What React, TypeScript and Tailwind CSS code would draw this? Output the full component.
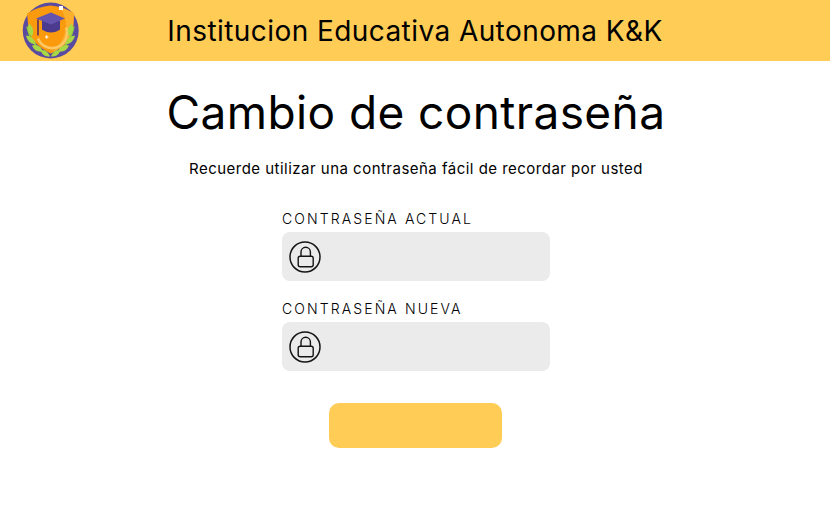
function Logo() {
  // viewBox uses the same coordinates as the page so it is easy to compare with the screenshot
  return (
    <svg width="58" height="58" viewBox="22 1.5 58 58" className="block">
      <circle cx="50.7" cy="30" r="28" fill="#5a4aa0" />
      <path d="M27 13 Q38 6 50.5 5 Q64 6 74 13 L73 30 Q70 44 50.5 53 Q33 44 29 32 Z" fill="#fb9a0c" />
      <path d="M60 7 Q68 9 74 13 L73 30 Q70 44 50.5 53 Q66 40 66 24 Q65 14 60 7 Z" fill="#fdae2b" />
      <path d="M38 38 A15 15 0 0 0 66 27" fill="none" stroke="#fcc866" strokeWidth="2.6" />
      <path d="M27 26 C 29 35 33 47 49 55 M74 26 C 72 35 68 47 52 55" fill="none" stroke="#8cc63f" strokeWidth="1.5" />
      <path d="M29 23 C 34 27 34 32 32 36 C 28 33 27 28 29 23 Z M26 35 C 31 35 35 39 36 44 C 31 44 27 40 26 35 Z M32 45 C 37 43 42 47 43 51 C 38 52 34 50 32 45 Z M41 51 C 44 48 48 51 50 56 C 45 56 43 55 41 51 Z" fill="#a8d843" />
      <path d="M72 23 C 67 27 67 32 69 36 C 73 33 74 28 72 23 Z M75 35 C 70 35 66 39 65 44 C 70 44 74 40 75 35 Z M69 45 C 64 43 59 47 58 51 C 63 52 67 50 69 45 Z M60 51 C 57 48 53 51 51 56 C 56 56 58 55 60 51 Z" fill="#a8d843" />
      <path d="M42 20 L 60 20 L 60 29 C 55 33 47 33 42 29 Z" fill="#4a3b8e" />
      <path d="M36 18 L 51 12 L 65 18 L 51 24 Z" fill="#6454ae" />
      <path d="M38 19 L 38 35" stroke="#7b3f4d" strokeWidth="2" />
      <rect x="59" y="5.5" width="4" height="4" fill="#ffffff" />
      <path d="M45 36.5 h3.4 M46.7 34.8 v3.4" stroke="#ffffff" strokeWidth="1" />
    </svg>
  );
}

function LockIcon() {
  return (
    <svg width="32" height="32" viewBox="0 0 32 32" fill="none" stroke="#141414" className="block">
      <circle cx="16" cy="16" r="15" strokeWidth="1.5" />
      <rect x="9.2" y="15.2" width="15" height="10.5" rx="2" strokeWidth="1.4" />
      <path d="M12 15.2 V11 a4.7 4.7 0 0 1 9.4 0 V15.2" strokeWidth="1.4" />
    </svg>
  );
}

function Field({ label }: { label: string }) {
  return (
    <div className="w-[268px]">
      <label className="block h-[23px] text-[14px] leading-[20px] font-light tracking-[0.15em] text-black">{label}</label>
      <div className="flex h-[49px] items-center rounded-lg bg-[#ebebeb] pl-[7px]">
        <LockIcon />
      </div>
    </div>
  );
}

export default function App() {
  return (
    <div className="min-h-[532px] bg-white font-['Inter','Liberation_Sans',sans-serif] text-black">
      <header className="grid h-[61px] grid-cols-[1fr_auto_1fr] items-center bg-[#ffcd55]">
        <div className="pl-[22px]">
          <Logo />
        </div>
        <h2 className="text-[28px] font-normal tracking-[0.43px] text-black">Institucion Educativa Autonoma K&amp;K</h2>
        <div />
      </header>
      <main className="flex flex-col items-center pl-[2px]">
        <h1 className="mt-[20px] h-[62px] text-[46px] leading-[62px] font-normal tracking-[0.4px]">Cambio de contraseña</h1>
        <p className="mt-[15px] h-[22px] text-[15px] leading-[22px] tracking-[0.48px]">Recuerde utilizar una contraseña fácil de recordar por usted</p>
        <form className="mt-[29px] flex flex-col items-center gap-[18px]">
          <Field label="CONTRASEÑA ACTUAL" />
          <Field label="CONTRASEÑA NUEVA" />
          <button type="button" className="mt-[14px] mr-[1px] h-[45px] w-[173px] rounded-[10px] bg-[#ffcd55]" />
        </form>
      </main>
    </div>
  );
}
